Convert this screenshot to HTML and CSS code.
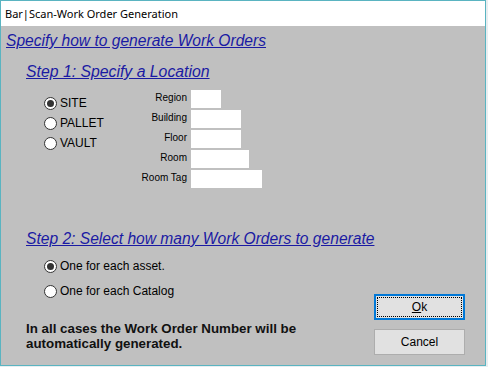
FILE: index.html
```html
<!DOCTYPE html>
<html>
<head>
<meta charset="utf-8">
<link rel="stylesheet" href="styles.css">
</head>
<body>
<div class="window">
  <div class="titlebar">Bar|Scan-Work Order Generation</div>
  <div class="content">
    <h1 class="heading">Specify how to generate Work Orders</h1>
    <h2 class="step step1">Step 1: Specify a Location</h2>
    <div class="location">
      <div class="radio-group">
        <div class="radio-row"><span class="radio checked"></span><span>SITE</span></div>
        <div class="radio-row"><span class="radio"></span><span>PALLET</span></div>
        <div class="radio-row"><span class="radio"></span><span>VAULT</span></div>
      </div>
      <div class="fields">
        <label class="field-label">Region</label><span class="input w30"></span>
        <label class="field-label">Building</label><span class="input w50"></span>
        <label class="field-label">Floor</label><span class="input w50"></span>
        <label class="field-label">Room</label><span class="input w58"></span>
        <label class="field-label">Room Tag</label><span class="input w71"></span>
      </div>
    </div>
    <h2 class="step step2">Step 2: Select how many Work Orders to generate</h2>
    <div class="lower">
      <div class="left">
        <div class="count-group">
          <div class="radio-row"><span class="radio checked"></span><span>One for each asset.</span></div>
          <div class="radio-row"><span class="radio"></span><span>One for each Catalog</span></div>
        </div>
        <p class="note">In all cases the Work Order Number will be<br>automatically generated.</p>
      </div>
      <div class="buttons">
        <button class="btn btn-default"><span class="focus"><u>O</u>k</span></button>
        <button class="btn">Cancel</button>
      </div>
    </div>
  </div>
</div>
</body>
</html>
```
FILE: styles.css
```css
html, body {
  margin: 0;
  padding: 0;
  background: #e9eef0;
}
.window {
  width: 484px;
  height: 364px;
  border: 1px solid #5ab4c1;
  display: flex;
  flex-direction: column;
  font-family: "Liberation Sans", Arial, sans-serif;
}
.titlebar {
  height: 25px;
  background: #ffffff;
  font-family: "Noto Sans", "Open Sans", sans-serif;
  font-size: 11px;
  line-height: 25px;
  padding-left: 4px;
  color: #000;
}
.content {
  flex: 1;
  background: #c0c0c0;
  display: flex;
  flex-direction: column;
}
.heading, .step {
  margin: 0;
  font-family: "Liberation Sans", Arial, sans-serif;
  font-size: 15.6px;
  font-weight: normal;
  font-style: italic;
  text-decoration: underline;
  color: #1a1aa3;
  line-height: 18px;
  white-space: nowrap;
}
.heading {
  margin-top: 6px;
  margin-left: 5px;
}
.step {
  margin-left: 25px;
}
.step1 {
  margin-top: 13px;
  font-size: 15.8px;
}
.step2 {
  margin-top: 42px;
}
.location {
  display: flex;
  margin-top: 9px;
}
.radio-group {
  width: 69px;
  margin-left: 43px;
  margin-top: 3px;
  display: flex;
  flex-direction: column;
}
.radio-row {
  height: 20px;
  display: flex;
  align-items: center;
  gap: 3px;
  font-size: 12px;
  color: #000;
  white-space: nowrap;
}
.radio {
  width: 11px;
  height: 11px;
  border: 1px solid #333;
  border-radius: 50%;
  background: #fff;
  display: flex;
  align-items: center;
  justify-content: center;
  flex: none;
}
.radio.checked::after {
  content: "";
  width: 7px;
  height: 7px;
  border-radius: 50%;
  background: #333;
}
.fields {
  display: grid;
  grid-template-columns: 74px auto;
  column-gap: 4px;
  row-gap: 2px;
  align-items: center;
  justify-items: start;
}
.field-label {
  justify-self: end;
  font-size: 10px;
  color: #000;
  margin-top: -3px;
}
.input {
  display: block;
  height: 18px;
  background: #fff;
}
.w30 { width: 30px; }
.w50 { width: 50px; }
.w58 { width: 58px; }
.w71 { width: 71px; }
.lower {
  display: flex;
  justify-content: space-between;
}
.left {
  display: flex;
  flex-direction: column;
}
.count-group {
  margin-top: 8px;
  margin-left: 43px;
  display: flex;
  flex-direction: column;
  gap: 5px;
}
.note {
  margin: 20px 0 0 25px;
  font-size: 13.33px;
  font-weight: bold;
  line-height: 15px;
  color: #111;
  white-space: nowrap;
}
.buttons {
  margin-top: 46px;
  margin-right: 20px;
  display: flex;
  flex-direction: column;
  gap: 9px;
}
.btn {
  width: 91px;
  height: 26px;
  margin: 0;
  padding: 0;
  background: #e1e1e1;
  border: 1px solid #adadad;
  font-family: "Liberation Sans", Arial, sans-serif;
  font-size: 12px;
  color: #000;
  display: flex;
  align-items: center;
  justify-content: center;
}
.btn-default {
  border: 2px solid #0078d7;
  padding: 1px;
}
.focus {
  flex: 1;
  align-self: stretch;
  border: 1px dotted #000;
  display: flex;
  align-items: center;
  justify-content: center;
}
```
